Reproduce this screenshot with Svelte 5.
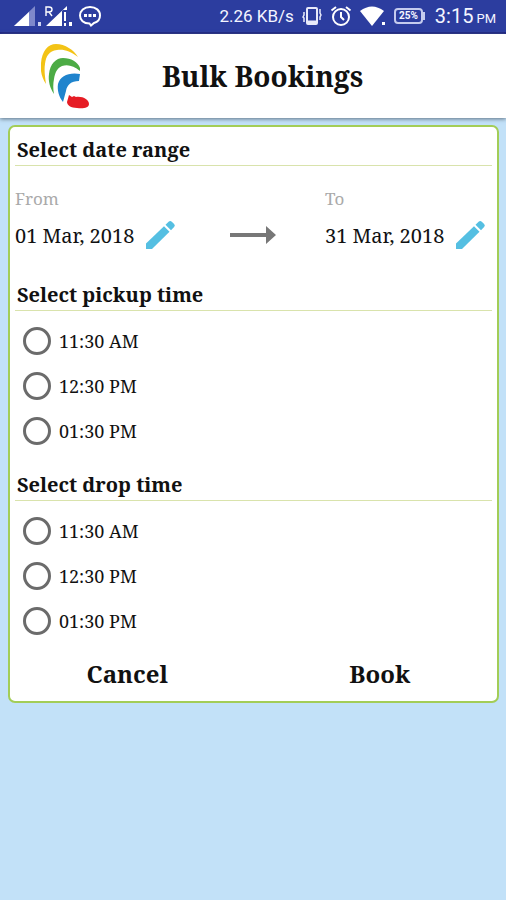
<script>
  let pickup = $state('');
  let drop = $state('');
  const times = ['11:30 AM', '12:30 PM', '01:30 PM'];
</script>

{#snippet dateField(label, value)}
  <div class="field">
    <span class="label">{label}</span>
    <div class="value">
      <span>{value}</span>
      <button class="edit" type="button" aria-label="Edit {label} date">
        <svg viewBox="0 0 30 30" width="30" height="30" fill="#55bfe2">
          <path d="M0 23.500 18 6.300l5.500 5.500L6 29H0z" />
          <path d="m19.500 4.800 3.100-3q1.600-1.500 3.200 0l2.300 2.300q1.500 1.500 0 3l-3.100 3.200z" />
        </svg>
      </button>
    </div>
  </div>
{/snippet}

<div class="screen">
  <div class="status">
    <div class="group">
      <svg class="signal" viewBox="0 0 76 28" width="76" height="28" aria-hidden="true">
        <path d="M14 24 35 4v20z" fill="#7f89cb" />
        <path d="M14 24 29 10v14z" fill="#fff" />
        <path d="M38 20h3v4h-3z" fill="#cfd4f1" />
        <path d="M46 24 67 4v4h-5v16z" fill="#fff" />
        <path d="M64 10h2v9h-2zM64 21h2v3h-2zM69 20h3v4h-3z" fill="#fff" />
        <path d="M46 14V5h3q3 0 3 2.500T49 10h-3m3 0 3 4" fill="none" stroke="#fff" stroke-width="1.400" />
      </svg>
      <svg viewBox="0 0 24 24" width="24" height="24" aria-hidden="true">
        <path d="M12 3c6 0 10 3.500 10 8.500 0 4-2.500 6.500-6 7.500l-3 2.500-1.500-2C5.500 19.500 2 16 2 11.500S6 3 12 3z" fill="none" stroke="#fff" stroke-width="2" />
        <path d="M6 10h3v3H6zM10.500 10h3v3h-3zM15 10h3v3h-3z" fill="#fff" />
      </svg>
    </div>
    <div class="group right">
      <span class="speed">2.26 KB/s</span>
      <svg viewBox="0 0 20 20" width="20" height="20" fill="none" stroke="#e8eafa" aria-hidden="true">
        <rect x="5" y="2" width="10" height="16" rx="1" stroke-width="2" />
        <path d="M5 16h10" stroke-width="3" />
        <path d="M2 6v3l-1 2 1 1v4M18 3v4l1 2-1 2v3" stroke-width="1.500" />
      </svg>
      <svg viewBox="0 0 22 22" width="22" height="22" fill="none" stroke="#fff" stroke-width="2" aria-hidden="true">
        <circle cx="11" cy="12" r="8" />
        <path d="M11 7v5l3 3M1.500 5.500 6 2M20.500 5.500 16 2" />
      </svg>
      <svg viewBox="0 0 26 22" width="26" height="22" fill="#fff" aria-hidden="true">
        <path d="M0 6Q12 -3 24 6L12 21z" />
        <path d="M22 17h3v3h-3z" />
      </svg>
      <span class="battery">25%</span>
      <span class="clock">3:15<small>PM</small></span>
    </div>
  </div>

  <header>
    <svg viewBox="0 0 50 68" width="50" height="68" aria-hidden="true">
      <path d="M5 42C1 36-1 29 0 21 1 9 7 2 15 2c9 0 18 6 22 13-8-6-14-8-21-7C8 9 5 14 4 22c-1 6 0 13 1 20z" fill="#f3c316" />
      <path d="M13 52C9 46 7 39 8 32c1-10 7-16 14-16 8 0 15 4 17 10v3c-6-5-12-7-18-5-5 2-7 7-8 13-1 5-1 10 0 15z" fill="#4cab45" />
      <path d="M22 60c-4-5-6-12-5-18 2-8 11-12 22-10l-1 7c-8 0-12 4-13 10-1 4-2 7-3 11z" fill="#1f84cd" />
      <path d="M28 53l3 2 2-1 2 1c7-1 13 3 13 7s-6 5-12 4c-6 0-10-3-10-6z" fill="#e61c24" />
    </svg>
    <h1>Bulk Bookings</h1>
  </header>

  <form class="card">
    <h2>Select date range</h2>
    <div class="dates">
      {@render dateField('From', '01 Mar, 2018')}
      <svg class="arrow" viewBox="0 0 46 20" width="46" height="20" fill="#777" aria-hidden="true">
        <path d="M0 8h36V1l10 9-10 9v-7H0z" />
      </svg>
      {@render dateField('To', '31 Mar, 2018')}
    </div>

    <h2 id="pickup-title">Select pickup time</h2>
    <div class="times" role="radiogroup" aria-labelledby="pickup-title">
      {#each times as time}
        <label><input type="radio" name="pickup" value={time} bind:group={pickup} />{time}</label>
      {/each}
    </div>

    <h2 id="drop-title">Select drop time</h2>
    <div class="times" role="radiogroup" aria-labelledby="drop-title">
      {#each times as time}
        <label><input type="radio" name="drop" value={time} bind:group={drop} />{time}</label>
      {/each}
    </div>

    <div class="actions">
      <button type="button">Cancel</button>
      <button type="button">Book</button>
    </div>
  </form>
</div>

<style>
  :global(body) {
    margin: 0;
    background: #c2e1f8;
  }
  .screen {
    min-height: 100vh;
    font-family: "Noto Serif", "Droid Serif", "DejaVu Serif Condensed", "DejaVu Serif", serif;
    color: #111;
  }
  svg {
    display: block;
    flex: none;
  }
  .status {
    box-sizing: border-box;
    height: 34px;
    display: flex;
    align-items: center;
    justify-content: space-between;
    padding-right: 10px;
    background: #2c3d9f;
    border-bottom: 2px solid #1c2383;
    color: #f4f5ff;
    font-family: Roboto, sans-serif;
  }
  .group {
    display: flex;
    align-items: center;
  }
  .signal {
    margin-right: 2px;
  }
  .right {
    gap: 8px;
  }
  .speed {
    font-size: 17px;
  }
  .battery {
    position: relative;
    box-sizing: border-box;
    width: 29px;
    height: 16px;
    border: 2px solid #c5cbee;
    border-radius: 4px;
    font-size: 10px;
    font-weight: 700;
    line-height: 12px;
    text-align: center;
  }
  .battery::after {
    content: "";
    position: absolute;
    top: 2px;
    right: -4px;
    width: 2px;
    height: 8px;
    background: #c5cbee;
  }
  .clock {
    display: flex;
    align-items: baseline;
    gap: 3px;
    margin-left: 4px;
    font-size: 20px;
  }
  .clock small {
    font-size: 13px;
  }
  header {
    height: 84px;
    display: flex;
    align-items: center;
    gap: 71px;
    padding-left: 41px;
    background: #fff;
    box-shadow: 0 1px 4px #5f7183;
  }
  h1 {
    margin: 0;
    font-size: 28px;
    line-height: 36px;
  }
  .card {
    margin: 7px 7px 0 8px;
    padding: 7px 5px 0;
    background: #fff;
    border: 2px solid #a3cd57;
    border-radius: 7px;
  }
  h2 {
    margin: 0;
    padding-left: 2px;
    font-size: 20px;
    line-height: 31px;
    border-bottom: 1px solid #d9e3ac;
  }
  .dates {
    display: flex;
    justify-content: space-between;
    align-items: flex-end;
    padding: 21px 2px 20px 0;
  }
  .field {
    width: 165px;
  }
  .label {
    display: block;
    font-size: 17px;
    line-height: 24px;
    color: #aaa;
  }
  .value {
    display: flex;
    align-items: center;
    gap: 12px;
    height: 48px;
    font-size: 20px;
    white-space: nowrap;
  }
  button {
    padding: 0;
    border: 0;
    background: none;
    color: inherit;
    font: inherit;
    cursor: pointer;
  }
  .arrow {
    margin-bottom: 14px;
  }
  .times {
    padding: 7px 0 16px 8px;
  }
  .times label {
    display: flex;
    align-items: center;
    gap: 8px;
    height: 45px;
    font-size: 18px;
  }
  input {
    appearance: none;
    box-sizing: border-box;
    width: 28px;
    height: 28px;
    margin: 0;
    border: 3px solid #6b6b6b;
    border-radius: 50%;
  }
  input:checked {
    background: radial-gradient(#6b6b6b 45%, transparent 50%);
  }
  .actions {
    display: flex;
    gap: 28px;
    height: 30px;
    padding-bottom: 12px;
  }
  .actions button {
    flex: 1;
    font-size: 24px;
    font-weight: 700;
    line-height: 30px;
  }
</style>
